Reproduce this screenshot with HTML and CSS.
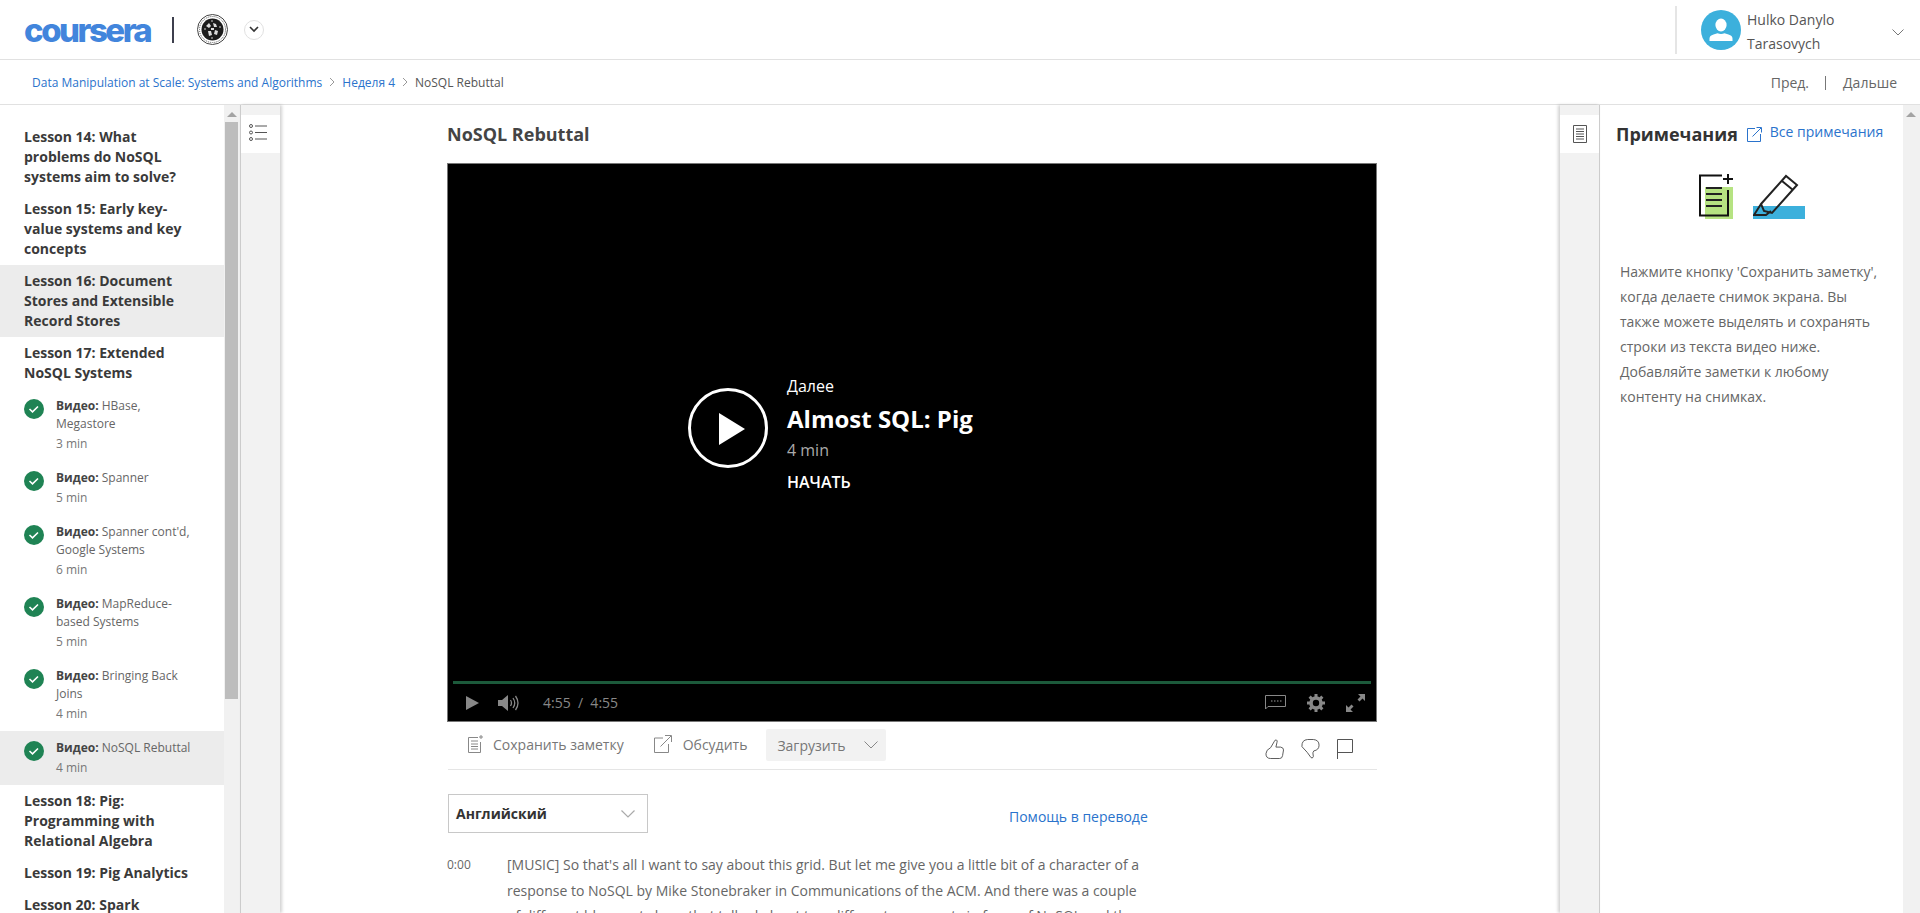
FILE: index.html
```html
<!DOCTYPE html>
<html lang="ru">
<head>
<meta charset="utf-8">
<title>NoSQL Rebuttal</title>
<link rel="stylesheet" href="styles.css">
</head>
<body>
<header class="topbar">
  <div class="brand">
    <span class="logo">coursera</span>
    <span class="brand-div"></span>
    <svg class="seal" width="31" height="31" viewBox="0 0 31 31">
      <circle cx="15.5" cy="15.5" r="15" fill="#fff" stroke="#444" stroke-width="1"/>
      <circle cx="15.5" cy="15.5" r="13" fill="none" stroke="#555" stroke-width="1" stroke-dasharray="1 1"/>
      <circle cx="15.5" cy="15.5" r="11" fill="#1c1c1c"/>
      <path d="M9 12l3-3 2 3-2 2zM16 9l3 1 1 3-3 0zM11 17l3 0 1 4-3 1zM18 16l3 1-1 4-3-1zM14 14l3 0 0 2-3 0z" fill="#ddd"/>
      <path d="M7 15h2M22 13h2M15 6v2M15 23v2" stroke="#ccc" stroke-width="1"/>
    </svg>
    <span class="brand-chev">
      <svg width="10" height="7" viewBox="0 0 10 7"><path d="M1 1l4 4 4-4" fill="none" stroke="#333" stroke-width="1.6"/></svg>
    </span>
  </div>
  <div class="user">
    <span class="user-div"></span>
    <svg class="avatar" width="40" height="40" viewBox="0 0 40 40">
      <circle cx="20" cy="20" r="20" fill="#3cb0dc"/>
      <ellipse cx="20" cy="15" rx="5.6" ry="6.4" fill="#fff"/>
      <path d="M8.5 31v-2.5q0-3 4-4l4-1.200q3.500 1.500 7 0l4 1.200q4 1 4 4v2.500z" fill="#fff"/>
    </svg>
    <div class="user-name">Hulko Danylo<br>Tarasovych</div>
    <svg class="user-chev" width="12" height="7" viewBox="0 0 12 7"><path d="M.5.500l5.500 5.500 5.500-5.500" fill="none" stroke="#777" stroke-width="1"/></svg>
  </div>
</header>

<nav class="crumbs">
  <div class="crumb-path">
    <a class="link">Data Manipulation at Scale: Systems and Algorithms</a>
    <svg class="crumb-sep" width="6" height="10" viewBox="0 0 6 10"><path d="M1 1l4 4-4 4" fill="none" stroke="#999"/></svg>
    <a class="link">Неделя 4</a>
    <svg class="crumb-sep" width="6" height="10" viewBox="0 0 6 10"><path d="M1 1l4 4-4 4" fill="none" stroke="#999"/></svg>
    <span class="crumb-cur">NoSQL Rebuttal</span>
  </div>
  <div class="pager">
    <span>Пред.</span><span class="pager-div"></span><span>Дальше</span>
  </div>
</nav>

<div class="workspace">
  <aside class="outline">
    <div class="outline-list">
      <h3 class="lesson">Lesson 14: What problems do NoSQL systems aim to solve?</h3>
      <h3 class="lesson">Lesson 15: Early key-value systems and key concepts</h3>
      <h3 class="lesson is-hl">Lesson 16: Document Stores and Extensible Record Stores</h3>
      <h3 class="lesson">Lesson 17: Extended NoSQL Systems</h3>
      <div class="item">
        <svg class="check" width="20" height="20" viewBox="0 0 20 20"><circle cx="10" cy="10" r="10" fill="#1f8354"/><path d="M5.500 10l3 2.800 5.500-5.300" fill="none" stroke="#fff" stroke-width="1.600"/></svg>
        <div class="item-text"><p><b>Видео:</b> HBase,<br>Megastore</p><span class="dur">3 min</span></div>
      </div>
      <div class="item">
        <svg class="check" width="20" height="20" viewBox="0 0 20 20"><circle cx="10" cy="10" r="10" fill="#1f8354"/><path d="M5.500 10l3 2.800 5.500-5.300" fill="none" stroke="#fff" stroke-width="1.600"/></svg>
        <div class="item-text"><p><b>Видео:</b> Spanner</p><span class="dur">5 min</span></div>
      </div>
      <div class="item">
        <svg class="check" width="20" height="20" viewBox="0 0 20 20"><circle cx="10" cy="10" r="10" fill="#1f8354"/><path d="M5.500 10l3 2.800 5.500-5.300" fill="none" stroke="#fff" stroke-width="1.600"/></svg>
        <div class="item-text"><p><b>Видео:</b> Spanner cont'd,<br>Google Systems</p><span class="dur">6 min</span></div>
      </div>
      <div class="item">
        <svg class="check" width="20" height="20" viewBox="0 0 20 20"><circle cx="10" cy="10" r="10" fill="#1f8354"/><path d="M5.500 10l3 2.800 5.500-5.300" fill="none" stroke="#fff" stroke-width="1.600"/></svg>
        <div class="item-text"><p><b>Видео:</b> MapReduce-<br>based Systems</p><span class="dur">5 min</span></div>
      </div>
      <div class="item">
        <svg class="check" width="20" height="20" viewBox="0 0 20 20"><circle cx="10" cy="10" r="10" fill="#1f8354"/><path d="M5.500 10l3 2.800 5.500-5.300" fill="none" stroke="#fff" stroke-width="1.600"/></svg>
        <div class="item-text"><p><b>Видео:</b> Bringing Back<br>Joins</p><span class="dur">4 min</span></div>
      </div>
      <div class="item is-hl">
        <svg class="check" width="20" height="20" viewBox="0 0 20 20"><circle cx="10" cy="10" r="10" fill="#1f8354"/><path d="M5.500 10l3 2.800 5.500-5.300" fill="none" stroke="#fff" stroke-width="1.600"/></svg>
        <div class="item-text"><p><b>Видео:</b> NoSQL Rebuttal</p><span class="dur">4 min</span></div>
      </div>
      <h3 class="lesson">Lesson 18: Pig: Programming with Relational Algebra</h3>
      <h3 class="lesson">Lesson 19: Pig Analytics</h3>
      <h3 class="lesson">Lesson 20: Spark</h3>
    </div>
    <div class="scrollbar scrollbar-left"><span class="arrow"></span><span class="thumb"></span></div>
  </aside>

  <div class="rail rail-left">
    <div class="tile">
      <svg class="tile-list" width="18" height="17" viewBox="0 0 18 17" fill="none" stroke="#555">
        <circle cx="2" cy="2" r="1.500"/><circle cx="2" cy="8.500" r="1.500"/><circle cx="2" cy="15" r="1.500"/>
        <path d="M6 2h12M6 8.500h12M6 15h12"/>
      </svg>
    </div>
  </div>

  <main class="content">
    <h1 class="title">NoSQL Rebuttal</h1>
    <section class="video">
      <div class="next">
        <svg class="play-big" width="80" height="80" viewBox="0 0 80 80">
          <circle cx="40" cy="40" r="38.500" fill="none" stroke="#fff" stroke-width="3"/>
          <path d="M31 25l26 16-26 16z" fill="#fff"/>
        </svg>
        <div class="next-text">
          <div class="next-label">Далее</div>
          <div class="next-title">Almost SQL: Pig</div>
          <div class="next-dur">4 min</div>
          <div class="next-go">НАЧАТЬ</div>
        </div>
      </div>
      <div class="progress"></div>
      <div class="controls">
        <svg class="c-play" width="13" height="14" viewBox="0 0 13 14"><path d="M0 0l13 7-13 7z" fill="#888"/></svg>
        <svg class="c-vol" width="21" height="18" viewBox="0 0 21 18"><path d="M0 6h4l6-5v16l-6-5H0z" fill="#888"/><path d="M12.500 6q2 3 0 6M15 4q3.500 5 0 10M17.500 2q5 7 0 14" fill="none" stroke="#888" stroke-width="1.300"/></svg>
        <span class="c-time">4:55 &nbsp;/&nbsp; 4:55</span>
        <span class="c-space"></span>
        <svg width="21" height="15" viewBox="0 0 21 15"><path d="M.5.500h20v11H3l-2.500 2.500z" fill="none" stroke="#888"/><path d="M6 6h1.500M9 6h1.500M12 6h1.500M15 6h1.500" stroke="#999" stroke-width="1.200"/></svg>
        <svg class="c-gear" width="18" height="18" viewBox="0 0 18 18"><circle cx="9" cy="9" r="5" fill="none" stroke="#888" stroke-width="3.600"/><path d="M9 0v3.500M9 14.500V18M0 9h3.500M14.500 9H18M2.600 2.600l2.500 2.500M12.900 12.900l2.500 2.500M2.600 15.400l2.500-2.500M12.900 5.100l2.500-2.500" stroke="#888" stroke-width="3"/></svg>
        <svg class="c-full" width="19" height="18" viewBox="0 0 19 18"><path d="M12 0h7v7l-2.500-2.500-3 3-2-2 3-3zM7 18H0v-7l2.500 2.500 3-3 2 2-3 3z" fill="#888"/></svg>
      </div>
    </section>

    <div class="toolbar">
      <svg class="t-ico t-save" width="15" height="18" viewBox="0 0 15 18" fill="none" stroke="#888"><path d="M10 2.500H.5v15h12V7"/><path d="M3 6h7M3 9h7M3 11.500h7M3 14h7"/><path d="M13 0v4M11 2h4"/></svg>
      <span class="t-label t-label-save">Сохранить заметку</span>
      <svg class="t-ico t-share" width="18" height="18" viewBox="0 0 18 18" fill="none" stroke="#888"><path d="M9 3H.5v14.500h14V9"/><path d="M6.500 11.500L17 1M11 .5h6.500V7"/></svg>
      <span class="t-label">Обсудить</span>
      <div class="download"><span>Загрузить</span>
        <svg width="14" height="8" viewBox="0 0 14 8"><path d="M.5.500L7 7 13.500.5" fill="none" stroke="#888"/></svg>
      </div>
      <div class="feedback">
        <svg width="19" height="20" viewBox="0 0 20 21" fill="none" stroke="#555"><path d="M6 9l3.500-6q1-2.500 2.500-2t.5 3l-1 4.500h5q3 .5 3 3l-1 6q-.5 3-3 3H6q-5 0-5-5 0-4 5-6.500z"/></svg>
        <svg width="19" height="20" viewBox="0 0 20 21" fill="none" stroke="#555"><path d="M1 8Q.5 1 7 .5h6q6 .5 6 6 0 5-5.500 6l-1 2 .5 4q-1 2.500-2.500 1L6.500 14 1 8z"/></svg>
        <svg width="16" height="20" viewBox="0 0 16 20" fill="none" stroke="#555"><path d="M.5 20V.5h15v13H.5"/></svg>
      </div>
    </div>

    <div class="lang-row">
      <div class="lang"><span>Английский</span>
        <svg width="14" height="8" viewBox="0 0 14 8"><path d="M.5.500L7 7 13.500.5" fill="none" stroke="#aaa" stroke-width="1.200"/></svg>
      </div>
      <a class="link help">Помощь в переводе</a>
    </div>

    <div class="transcript">
      <span class="ts">0:00</span>
      <p class="tx">[MUSIC] So that's all I want to say about this grid. But let me give you a little bit of a character of a response to NoSQL by Mike Stonebraker in Communications of the ACM. And there was a couple of different blog posts here that talked about two different arguments in favor of NoSQL and the</p>
    </div>
  </main>

  <div class="rail rail-right">
    <div class="tile">
      <svg width="14" height="18" viewBox="0 0 14 18" fill="none" stroke="#555"><path d="M.5.500h13v17H.5z"/><path d="M3 4h8M3 6.500h8M3 9h8M3 11.500h8M3 14h8"/></svg>
    </div>
  </div>

  <aside class="notes">
    <div class="notes-body">
      <div class="notes-head">
        <h2 class="notes-title">Примечания</h2>
        <svg class="ext" width="15" height="15" viewBox="0 0 15 15" fill="none" stroke="#2a73cc"><path d="M8 1.500H.5v13h13V7"/><path d="M5.500 9.500L14 1M9.500.5h5v5"/></svg>
        <a class="link all">Все примечания</a>
      </div>
      <div class="notes-art">
        <svg width="34" height="45" viewBox="0 0 34 45">
          <rect x="6" y="13" width="28" height="32" fill="#b6e382"/>
          <path d="M23 1.500H1v40h28V16" fill="none" stroke="#111" stroke-width="2"/>
          <path d="M7 14h16M7 20h16M7 26h16M7 32h16" stroke="#222" stroke-width="2"/>
          <path d="M29 0v10M24 5h10" stroke="#111" stroke-width="2"/>
        </svg>
        <svg width="52" height="45" viewBox="0 0 52 45">
          <rect y="32" width="52" height="13" fill="#3cb0dc"/>
          <path d="M8 30L33 2l11 9-25 28-8-2zM29 7l11 9M8 30L1 41h12l5-4" fill="none" stroke="#222" stroke-width="2"/>
        </svg>
      </div>
      <p class="notes-text">Нажмите кнопку 'Сохранить заметку', когда делаете снимок экрана. Вы также можете выделять и сохранять строки из текста видео ниже. Добавляйте заметки к любому контенту на снимках.</p>
    </div>
    <div class="scrollbar scrollbar-right"><span class="arrow"></span></div>
  </aside>
</div>
</body>
</html>
```

FILE: styles.css
```css
* { box-sizing: border-box; }
html, body { height: 100%; }
body {
  margin: 0;
  height: 913px;
  overflow: hidden;
  display: flex;
  flex-direction: column;
  background: #fff;
  color: #555;
  font-family: "Open Sans", "Liberation Sans", sans-serif;
  font-size: 14px;
}
h1, h2, h3, p { margin: 0; }
.link { color: #2a73cc; text-decoration: none; }

.topbar {
  flex: 0 0 60px;
  display: flex;
  justify-content: space-between;
  align-items: center;
  border-bottom: 1px solid #e1e1e1;
}
.brand { display: flex; align-items: center; padding-left: 24px; }
.logo {
  width: 127px;
  color: #4285dc;
  font-family: Inter, "Open Sans", sans-serif;
  font-weight: 800;
  font-size: 33px;
  line-height: 34px;
  letter-spacing: -2.5px;
  white-space: nowrap;
}
.brand-div { width: 2px; height: 26px; margin-left: 21px; background: #3d3f4d; }
.seal { margin-left: 23px; }
.brand-chev {
  width: 20px; height: 20px;
  margin-left: 16px;
  display: flex; align-items: center; justify-content: center;
  border: 1px solid #e1e1e1; border-radius: 50%;
}
.user { display: flex; align-items: center; height: 59px; }
.user-div { width: 2px; height: 48px; background: #e5e5e5; margin-right: 24px; }
.avatar { margin-right: 6px; }
.user-name { width: 145px; padding-top: 5px; line-height: 24px; color: #555; }
.user-chev { margin: 5px 16px 0 0; }

.crumbs {
  flex: 0 0 45px;
  display: flex;
  justify-content: space-between;
  align-items: center;
  padding: 0 23px 0 32px;
  border-bottom: 1px solid #e1e1e1;
}
.crumb-path { display: flex; align-items: center; font-size: 12px; }
.crumb-sep { margin: 0 7px; }
.crumb-cur { color: #555; }
.pager { display: flex; align-items: center; color: #666; }
.pager-div { width: 1px; height: 14px; background: #777; margin: 2px 17px 0 16px; }

.workspace { flex: 1; min-height: 0; display: flex; }

.outline { flex: 0 0 240px; display: flex; overflow: hidden; }
.outline-list { flex: 0 0 224px; padding-top: 16px; }
.lesson {
  padding: 6px 30px 6px 24px;
  font-size: 14px;
  line-height: 20px;
  font-weight: 700;
  color: #3a3a3a;
}
.is-hl { background: #ececec; }
.item { display: flex; padding: 8px 24px; }
.check { flex: none; margin-top: 2px; }
.item-text { width: 142px; margin-left: 12px; font-size: 12px; color: #666; }
.item-text p { line-height: 18px; }
.item-text b { font-weight: 700; color: #444; }
.dur { display: block; padding-top: 1px; line-height: 19px; color: #777; }

.scrollbar { position: relative; flex: 0 0 16px; background: #f1f1f1; }
.arrow {
  position: absolute; top: 7px; left: 3px;
  border: 5px solid transparent;
  border-top: 0;
  border-bottom-color: #a3a3a3;
}
.thumb {
  position: absolute; top: 17px; left: 1px;
  width: 13px; height: 577px;
  background: #bdbdbd;
}
.scrollbar-right { flex: 0 0 17px; }

.rail { flex: 0 0 40px; background: #f2f2f2; padding-top: 10px; position: relative; }
.rail-left { border-left: 1px solid #ccc; box-shadow: 2px 0 3px rgba(0,0,0,.18); }
.rail-right { border-right: 1px solid #ccc; box-shadow: -2px 0 3px rgba(0,0,0,.18); }
.tile {
  height: 38px;
  background: #fff;
  display: flex; align-items: center; justify-content: center;
}
.tile-list { margin: -4px 6px 0 0; }

.content { flex: 1; min-width: 0; padding: 17px 0 0 167px; overflow: hidden; }
.title { font-size: 18px; line-height: 24px; font-weight: 700; color: #444; margin-bottom: 17px; }

.video {
  width: 930px;
  height: 559px;
  background: #000;
  border: 1px solid #777;
  display: flex;
  flex-direction: column;
}
.next { flex: 1; display: flex; align-items: center; padding: 10px 0 0 240px; color: #fff; }
.next-text { margin: 12px 0 0 19px; font-size: 16px; }
.next-label { line-height: 20px; }
.next-title { font-size: 24px; line-height: 32px; font-weight: 700; margin-top: 7px; }
.next-dur { line-height: 20px; margin-top: 5px; color: #aaa; }
.next-go { line-height: 20px; margin-top: 12px; font-weight: 600; }
.progress { height: 3px; margin: 0 5px; background: #1c5a3b; }
.controls {
  flex: 0 0 37px;
  display: flex; align-items: center;
  padding: 0 11px 0 18px;
  color: #888;
}
.c-vol { margin-left: 19px; }
.c-time { margin-left: 24px; font-size: 14px; }
.c-space { flex: 1; }
.c-gear { margin-left: 21px; }
.c-full { margin-left: 21px; }

.toolbar {
  width: 929px;
  margin-left: 1px;
  margin-top: 7px;
  height: 41px;
  display: flex;
  align-items: flex-start;
  border-bottom: 1px solid #e5e5e5;
  color: #777;
}
.t-ico { margin: 6px 0 0 19px; flex: none; }
.t-save { margin-left: 20px; }
.t-share { margin-left: 30px; }
.t-label { margin-left: 11px; line-height: 32px; }
.t-label-save { margin-left: 10px; }
.download {
  width: 120px; height: 32px;
  margin-left: 19px;
  padding: 0 8px 0 11px;
  display: flex; align-items: center; justify-content: space-between;
  background: #f2f2f2;
  border-radius: 2px;
}
.feedback { margin-left: auto; margin-right: 24px; padding-top: 10px; display: flex; gap: 17px; }

.lang-row { display: flex; margin-top: 24px; margin-left: 1px; }
.lang {
  width: 200px; height: 39px;
  padding: 0 12px 0 7px;
  display: flex; align-items: center; justify-content: space-between;
  border: 1px solid #c8c8c8;
  font-weight: 700;
  color: #333;
}
.help { margin: 13px 0 0 361px; line-height: 20px; }

.transcript { display: flex; margin-top: 19px; }
.ts { flex: 0 0 60px; font-size: 12px; line-height: 26px; color: #666; }
.tx { width: 640px; line-height: 25.600px; color: #666; }

.notes { flex: 0 0 320px; min-width: 0; display: flex; }
.notes-body { flex: 1; min-width: 0; padding: 17px 16px 0; }
.notes-head { display: flex; align-items: center; height: 24px; }
.notes-title { font-size: 18px; line-height: 24px; font-weight: 700; color: #333; }
.ext { margin-left: 9px; }
.all { margin-left: 8px; line-height: 20px; margin-top: -4px; }
.notes-art { display: flex; justify-content: center; gap: 20px; margin: 28px 0 0 1px; }
.notes-text { margin: 40px 0 0 4px; width: 265px; line-height: 25px; color: #666; }
```
